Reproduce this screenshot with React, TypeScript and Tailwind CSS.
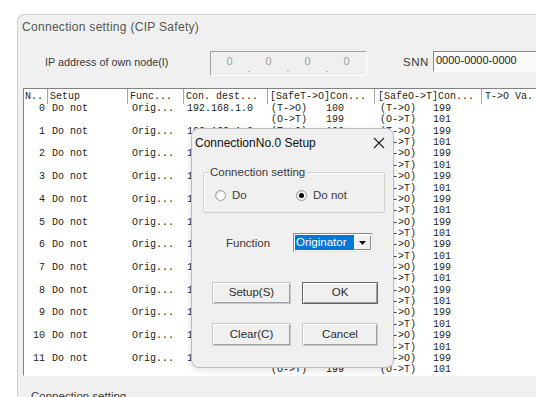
import React from 'react';

const rows = Array.from({ length: 12 }, (_, i) => i);

const cols = 'grid grid-cols-[24px_80px_56px_84px_107px_107px_1fr]';

const headers = ['N..', 'Setup', 'Func...', 'Con. dest...', '[SafeT->O]Con...', '[SafeO->T]Con...', 'T->O Va.'];

const Radio: React.FC<{ checked?: boolean; label: string }> = ({ checked, label }) => (
  <div className="flex items-center gap-[6px]">
    <span className="flex h-[11px] w-[11px] items-center justify-center rounded-full border border-[#9a9a9a] bg-white shadow-[inset_1px_1px_0_#dcdcdc]">
      {checked && <span className="h-[5px] w-[5px] rounded-full bg-black" />}
    </span>
    <span>{label}</span>
  </div>
);

const Btn: React.FC<{ label: string; primary?: boolean; className?: string }> = ({ label, primary, className }) => (
  <div
    className={
      'flex items-center justify-center border bg-[#f0f0f0] text-[11.5px] text-[#2a2a2a] shadow-[inset_1px_1px_0_#ffffff,inset_-1px_-1px_0_#a0a0a0] ' +
      (primary ? 'border-[#646464] ' : 'border-[#c8c8c8] ') +
      (className ?? '')
    }
  >
    {label}
  </div>
);

export default function App() {
  return (
    <div className="relative h-[397px] w-[536px] overflow-hidden bg-white font-['Liberation_Sans',Arial,sans-serif]">
      {/* main window */}
      <div className="ml-[17px] mt-[14px] h-[400px] w-[540px] rounded-tl-[7px] border-l border-t border-[#cfcfcf] bg-[#f0f0f0]">
        <div className="pl-[4px] pt-[4px] text-[12px] leading-[16px] tracking-[0.3px] text-[#555555]">Connection setting (CIP Safety)</div>

        <div className="mt-[16px] flex items-start pl-[27px] text-[11.5px] text-[#3a3a3a]">
          <div className="w-[165px] pt-[3px] text-[10.8px] leading-[16px]">IP address of own node(I)</div>
          <div className="flex h-[25px] w-[157px] border border-l-[#a0a0a0] border-t-[#a0a0a0] border-r-[#ffffff] border-b-[#ffffff] text-[11px] text-[#a0a0a0]">
            <span className="w-[37px] pt-[2px] text-center leading-[14px]">0</span>
            <span className="flex w-[2px] items-end justify-center pb-[2px] leading-[10px]">.</span>
            <span className="w-[37px] pt-[2px] text-center leading-[14px]">0</span>
            <span className="flex w-[2px] items-end justify-center pb-[2px] leading-[10px]">.</span>
            <span className="w-[37px] pt-[2px] text-center leading-[14px]">0</span>
            <span className="flex w-[2px] items-end justify-center pb-[2px] leading-[10px]">.</span>
            <span className="w-[37px] pt-[2px] text-center leading-[14px]">0</span>
          </div>
          <div className="ml-[36px] w-[30px] pt-[3px] leading-[16px] tracking-[0.5px]">SNN</div>
          <div className="h-[21px] flex-1 border border-l-[#8a8a8a] border-t-[#8a8a8a] border-r-[#ffffff] border-b-[#ffffff] bg-[#fafafa] pl-[2px] pt-[1px] text-[11px] leading-[14px] text-[#1a1a1a]">
            0000-0000-0000
          </div>
        </div>

        {/* list */}
        <div className="ml-[5px] mt-[12px] h-[288px] border-l border-t border-b border-l-[#828282] border-t-[#828282] border-b-[#ffffff] bg-white font-['Liberation_Mono','Courier_New',monospace] text-[10px] text-[#1e1e1e]">
          <div className={cols + ' h-[14px] leading-[15px]'}>
            {headers.map((h, i) => (
              <div key={i} className={'whitespace-nowrap border-r border-[#a8a8a8] ' + (i === 0 ? 'pl-[1px]' : i === 5 || i === 6 ? 'pl-[3px]' : 'pl-[2px]')}>
                {h}
              </div>
            ))}
          </div>
          {rows.map((r) => (
            <div key={r} className={cols + ' leading-[11.36px]'}>
              <div className="pr-[3px] text-right">{r}</div>
              <div className="pl-[4px]">Do not</div>
              <div className="pl-[4px]">Orig...</div>
              <div className="pl-[3px]">192.168.1.0</div>
              <div className="pl-[3px]">
                <div className="flex"><span className="w-[55px]">(T-&gt;O)</span><span>100</span></div>
                <div className="flex"><span className="w-[55px]">(O-&gt;T)</span><span>199</span></div>
              </div>
              <div className="pl-[5px]">
                <div className="flex"><span className="w-[53px]">(T-&gt;O)</span><span>199</span></div>
                <div className="flex"><span className="w-[53px]">(O-&gt;T)</span><span>101</span></div>
              </div>
              <div />
            </div>
          ))}
        </div>

        <div className="ml-[13px] mt-[12px] text-[11.5px] leading-[16px] text-[#3a3a3a]">Connection setting</div>
      </div>

      {/* dialog */}
      <div className="absolute left-[191px] top-[128px] flex h-[240px] w-[203px] flex-col rounded-[8px] border border-[#bcbcbc] bg-[#f0f0f0] text-[11.5px] text-[#3a3a3a] shadow-[0_2px_6px_rgba(0,0,0,0.12)]">
        <div className="flex h-[27px] items-center justify-between pl-[3px] pr-[8px]">
          <span className="text-[12px] text-[#111]">ConnectionNo.0 Setup</span>
          <svg width="12" height="12" viewBox="0 0 12 12" fill="none" stroke="#222" strokeWidth="1.1">
            <path d="M1 1L11 11M11 1L1 11" />
          </svg>
        </div>

        <div className="relative ml-[11px] mt-[16px] h-[41px] w-[182px] rounded-[2px] border border-[#d0d0d0] shadow-[inset_1px_1px_0_#ffffff]">
          <span className="absolute -top-[8px] left-[5px] bg-[#f0f0f0] px-[1px] leading-[14px]">Connection setting</span>
          <div className="flex pl-[11px] pt-[15px] leading-[14px]">
            <div className="w-[81px]"><Radio label="Do" /></div>
            <Radio checked label="Do not" />
          </div>
        </div>

        <div className="mt-[20px] flex items-center pl-[34px]">
          <span className="w-[67px] leading-[14px]">Function</span>
          <div className="flex h-[19px] w-[80px] border border-l-[#8a8a8a] border-t-[#8a8a8a] border-r-[#e6e6e6] border-b-[#e6e6e6] bg-white p-[1px]">
            <span className="flex flex-1 items-center bg-[#0078d7] pl-[1px] text-white">Originator</span>
            <span className="flex w-[17px] items-center justify-center border border-l-[#ffffff] border-t-[#ffffff] border-r-[#8a8a8a] border-b-[#8a8a8a] bg-[#f0f0f0]">
              <svg width="7" height="4" viewBox="0 0 7 4"><path d="M0 0H7L3.5 4Z" fill="#111" /></svg>
            </span>
          </div>
        </div>

        <div className="mt-[30px] grid grid-cols-[79px_76px] gap-x-[11px] gap-y-[19px] pl-[20px]">
          <Btn label="Setup(S)" className="h-[22px]" />
          <Btn label="OK" primary className="h-[22px]" />
          <Btn label="Clear(C)" className="h-[23px]" />
          <Btn label="Cancel" className="h-[23px]" />
        </div>
      </div>
    </div>
  );
}
